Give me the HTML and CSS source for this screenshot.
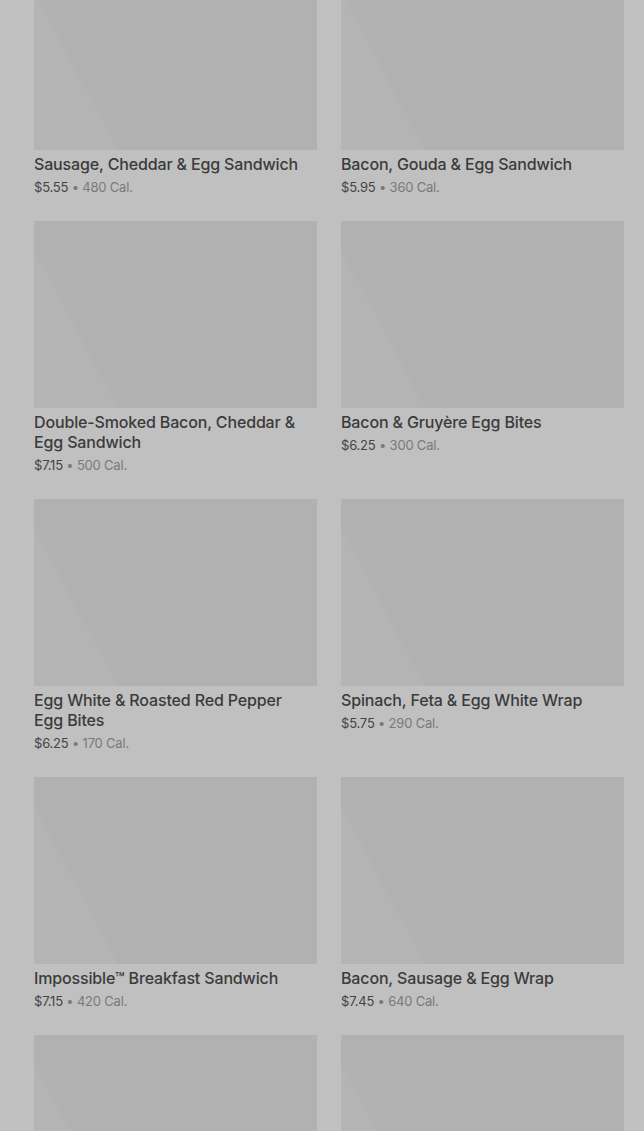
FILE: index.html
```html
<!DOCTYPE html>
<html lang="en">
<head>
  <meta charset="UTF-8">
  <title>Breakfast Menu</title>
  <meta name="viewport" content="width=device-width, initial-scale=1.0"/>
  <link rel="stylesheet" href="styles.css">
</head>
<body>

<div class="menu-grid">
  <div class="product">
    <div class="product-img"></div>
    <div class="product-name">Sausage, Cheddar &amp; Egg Sandwich</div>
    <div class="product-info">$5.55 <span class="cal">• 480 Cal.</span></div>
  </div>
  <div class="product">
    <div class="product-img"></div>
    <div class="product-name">Bacon, Gouda &amp; Egg Sandwich</div>
    <div class="product-info">$5.95 <span class="cal">• 360 Cal.</span></div>
  </div>

  <div class="product">
    <div class="product-img"></div>
    <div class="product-name">Double-Smoked Bacon, Cheddar &amp; Egg Sandwich</div>
    <div class="product-info">$7.15 <span class="cal">• 500 Cal.</span></div>
  </div>
  <div class="product">
    <div class="product-img"></div>
    <div class="product-name">Bacon &amp; Gruyère Egg Bites</div>
    <div class="product-info">$6.25 <span class="cal">• 300 Cal.</span></div>
  </div>

  <div class="product">
    <div class="product-img"></div>
    <div class="product-name">Egg White &amp; Roasted Red Pepper Egg Bites</div>
    <div class="product-info">$6.25 <span class="cal">• 170 Cal.</span></div>
  </div>
  <div class="product">
    <div class="product-img"></div>
    <div class="product-name">Spinach, Feta &amp; Egg White Wrap</div>
    <div class="product-info">$5.75 <span class="cal">• 290 Cal.</span></div>
  </div>

  <div class="product">
    <div class="product-img"></div>
    <div class="product-name">Impossible™ Breakfast Sandwich</div>
    <div class="product-info">$7.15 <span class="cal">• 420 Cal.</span></div>
  </div>
  <div class="product">
    <div class="product-img"></div>
    <div class="product-name">Bacon, Sausage &amp; Egg Wrap</div>
    <div class="product-info">$7.45 <span class="cal">• 640 Cal.</span></div>
  </div>

  <div class="product">
    <div class="product-img"></div>
  </div>
  <div class="product">
    <div class="product-img"></div>
  </div>
</div>

</body>
</html>
```

FILE: styles.css
```css
body {
  margin: 0;
  background: #c0c0c0;
  font-family: Inter, "Noto Sans", sans-serif;
  color: #3b3b3b;
  overflow: hidden;
}

.menu-grid {
  display: grid;
  grid-template-columns: 283px 283px;
  column-gap: 24px;
  row-gap: 24px;
  padding: 0 20px 0 34px;
  margin-top: -37px;
}

.product-img {
  height: 187px;
  background: linear-gradient(62deg, #b4b4b4 0%, #b4b4b4 22%, #b1b1b1 22%, #b1b1b1 100%);
  margin-bottom: 4px;
}

.product-name {
  font-size: 16px;
  font-weight: 500;
  line-height: 20px;
  letter-spacing: -0.15px;
  padding-right: 12px;
}

.product-info {
  margin-top: 3px;
  font-size: 13px;
  line-height: 20px;
  letter-spacing: -0.2px;
  color: #444;
}

.cal {
  color: #7a7a7a;
}
```
